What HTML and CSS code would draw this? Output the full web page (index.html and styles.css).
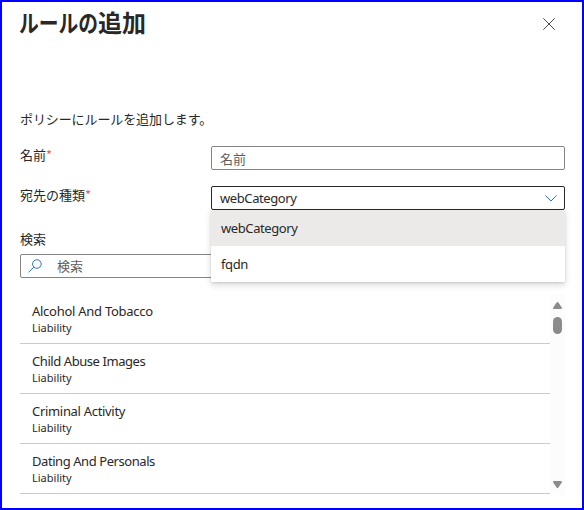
FILE: index.html
```html
<!DOCTYPE html>
<html lang="ja">
<head>
<meta charset="utf-8">
<title>ルールの追加</title>
<link rel="stylesheet" href="styles.css">
</head>
<body>
<main class="panel">
  <header class="header">
    <h1 class="title"><span class="kana">ルールの</span>追加</h1>
    <button class="close" aria-label="閉じる"><svg width="12" height="12" viewBox="0 0 12 12"><path d="M0.3 0.3 11.7 11.7M11.7 0.3 0.3 11.7"/></svg></button>
  </header>
  <p class="intro">ポリシーにルールを追加します。</p>
  <div class="row">
    <label class="label">名前<span class="req">*</span></label>
    <div class="box muted jp">名前</div>
  </div>
  <div class="row second">
    <label class="label">宛先の種類<span class="req">*</span></label>
    <div class="box select"><span class="val">webCategory</span>
      <svg class="chevron" width="12" height="7" viewBox="0 0 12 7"><path d="M0.4 0.5 6 6 11.6 0.5"/></svg>
      <div class="menu">
        <div class="option selected"><span>webCategory</span></div>
        <div class="option"><span class="fq">fqdn</span></div>
      </div>
    </div>
  </div>
  <div class="search-label">検索</div>
  <div class="search muted">
    <svg class="glass" width="14" height="14" viewBox="0 0 14 14"><circle cx="8.9" cy="5" r="4.3"/><path d="M5.8 8.1 0.5 13.4"/></svg>検索
  </div>
  <div class="list">
    <div class="items">
      <div class="item"><div class="name n1">Alcohol And Tobacco</div><div class="sub">Liability</div></div>
      <div class="item"><div class="name n2">Child Abuse Images</div><div class="sub">Liability</div></div>
      <div class="item"><div class="name n3">Criminal Activity</div><div class="sub">Liability</div></div>
      <div class="item"><div class="name n4">Dating And Personals</div><div class="sub">Liability</div></div>
    </div>
    <div class="scrollbar">
      <svg width="9" height="7" viewBox="0 0 9 7"><path d="M3.6.6Q4.5-.5 5.4.6L8.8 5.4Q9.3 7 8 7H1Q-.3 7 .2 5.4Z"/></svg>
      <div class="thumb"></div>
      <svg class="down" width="9" height="7" viewBox="0 0 9 7"><path d="M3.6 6.4Q4.5 7.5 5.4 6.4L8.8 1.6Q9.3 0 8 0H1Q-.3 0 .2 1.6Z"/></svg>
    </div>
  </div>
</main>
</body>
</html>
```
FILE: styles.css
```css
* { box-sizing: border-box; }
body {
  margin: 0;
  background: #fff;
  color: #292827;
  font: 13px/18px "Noto Sans", "Noto Sans CJK JP", sans-serif;
}
svg { display: block; }
.panel {
  width: 584px;
  height: 510px;
  border: 2px solid #0000fe;
  padding: 0 17px 0 18px;
  overflow: hidden;
}
.header {
  display: flex;
  justify-content: space-between;
  height: 108px;
}
.title {
  margin: 2px 0 0 -1px;
  font: 700 24px/36px "Noto Sans CJK JP", sans-serif;
  white-space: nowrap;
}
.kana {
  display: inline-block;
  width: 79px;
  transform: scaleX(.823);
  transform-origin: left;
}
.close {
  width: 12px;
  height: 12px;
  margin: 16px 10px 0 0;
  padding: 0;
  border: 0;
  background: none;
}
.close path { stroke: #454545; stroke-width: 1; }
.intro { margin: 0; height: 36px; font-family: "Noto Sans CJK JP", sans-serif; letter-spacing: -.1px; }
.row { display: flex; height: 24px; }
.second { margin-top: 16px; }
.label { width: 191px; line-height: 18px; font-family: "Noto Sans CJK JP", sans-serif; }
.req { color: #ee5a5e; }
.box {
  flex: 1;
  height: 24px;
  border: 1px solid #858483;
  border-radius: 2px;
  padding: 0 8px;
  line-height: 24px;
}
.muted { color: #605e5c; }
.select {
  position: relative;
  display: flex;
  justify-content: space-between;
  align-items: center;
  border-color: #292827;
  padding-right: 7px;
  letter-spacing: -.4px;
}
.chevron path, .glass path, .glass circle { fill: none; stroke: #2c75c9; stroke-width: 1; }
.menu {
  position: absolute;
  z-index: 1;
  top: 23px;
  left: -1px;
  width: 354px;
  background: #fff;
  box-shadow: 0 3px 7px rgba(0,0,0,.14), 0 1px 2px rgba(0,0,0,.12);
}
.option { height: 36px; padding: 0 10px; line-height: 36px; }
.selected { background: #ebeae8; }
.search-label { margin-top: 19px; height: 25px; font-family: "Noto Sans CJK JP", sans-serif; line-height: 20px; }
.search {
  display: flex;
  align-items: center;
  gap: 15px;
  height: 24px;
  border: 1px solid #858483;
  border-radius: 2px;
  padding-left: 7px;
}
.list { display: flex; height: 201px; margin-top: 16px; }
.items { flex: 1; }
.item { height: 50px; border-bottom: 1px solid #cbcbcb; padding: 9px 12px 0; }
.name { line-height: 17px; }
.n1 { letter-spacing: -.27px; }
.n2 { letter-spacing: -.43px; }
.n3 { letter-spacing: -.31px; }
.n4 { letter-spacing: -.43px; }
.sub { font-size: 11px; line-height: 16px; }
.scrollbar {
  display: flex;
  flex-direction: column;
  align-items: center;
  width: 15px;
  padding: 8px 0 7px;
  background: #fcfcfc;
}
.scrollbar path { fill: #8b8b8b; }
.thumb { width: 9px; height: 17px; margin-top: 8px; border-radius: 5px; background: #8b8b8b; }
.down { margin-top: auto; }
```
